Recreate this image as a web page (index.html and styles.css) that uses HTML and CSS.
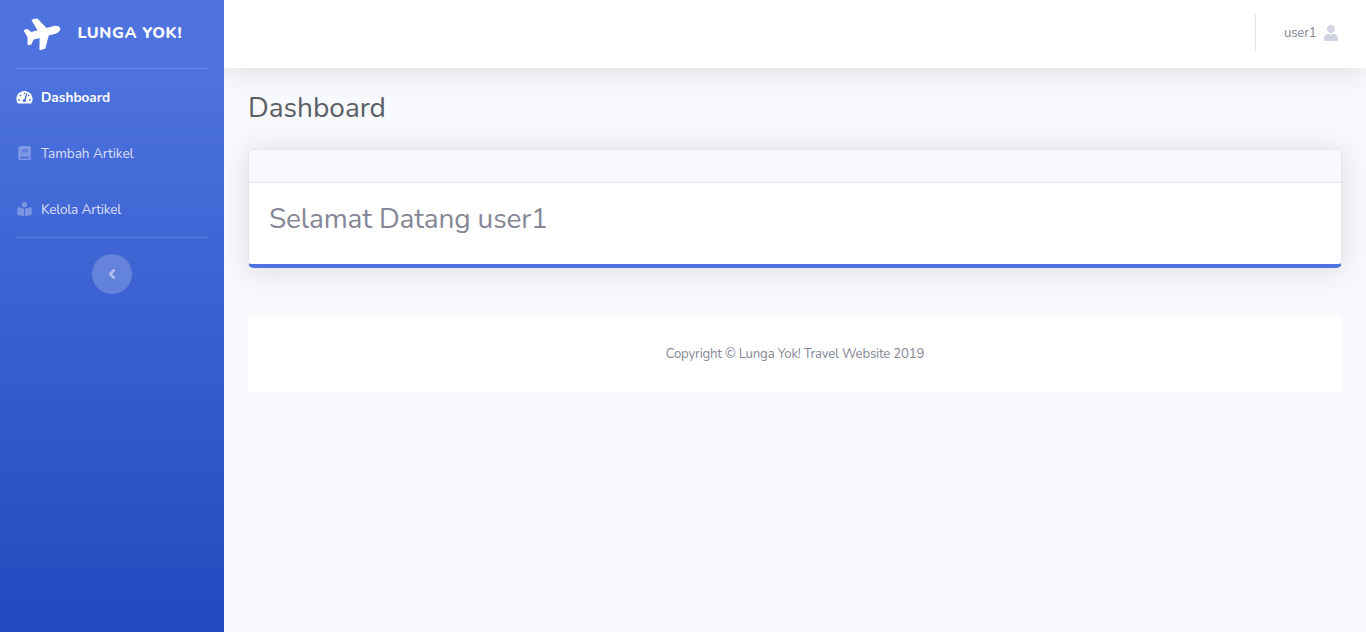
FILE: index.html
```html
<!DOCTYPE html>
<html lang="id">
<head>
<meta charset="utf-8">
<title>Lunga Yok! - Dashboard</title>
<link rel="stylesheet" href="styles.css">
</head>
<body>
<div class="wrapper">
  <nav class="sidebar">
    <a class="brand">
      <svg class="brand-icon" viewBox="0 0 576 512"><path d="M480 192H365.71L260.61 8.06A16.014 16.014 0 0 0 246.71 0h-65.5c-10.63 0-18.3 10.17-15.38 20.39L214.86 192H112l-43.2-57.6c-3.02-4.03-7.77-6.4-12.8-6.4H16.01C5.6 128-2.04 137.78.49 147.88L32 256 .49 364.12C-2.04 374.22 5.6 384 16.01 384H56c5.04 0 9.78-2.37 12.8-6.4L112 320h102.86l-49.03 171.6c-2.92 10.22 4.75 20.4 15.38 20.4h65.5c5.74 0 11.04-3.08 13.89-8.06L365.71 320H480c35.35 0 96-28.65 96-64s-60.65-64-96-64z"/></svg>
      <span class="brand-text">LUNGA YOK!</span>
    </a>
    <hr class="divider">
    <a class="nav-link active">
      <svg class="nav-icon" viewBox="0 0 576 512"><path d="M288 32C128.94 32 0 160.94 0 320c0 52.8 14.25 102.26 39.06 144.8 5.61 9.62 16.3 15.2 27.44 15.2h443c11.14 0 21.83-5.58 27.44-15.2C561.75 422.26 576 372.8 576 320c0-159.06-128.94-288-288-288zm0 64c14.71 0 26.58 10.13 30.32 23.65-1.11 2.26-2.64 4.23-3.45 6.67l-9.22 27.67c-5.13 3.49-10.97 6.01-17.64 6.01-17.67 0-32-14.33-32-32S270.33 96 288 96zM96 384c-17.67 0-32-14.33-32-32s14.33-32 32-32 32 14.33 32 32-14.33 32-32 32zm48-160c-17.67 0-32-14.33-32-32s14.33-32 32-32 32 14.33 32 32-14.33 32-32 32zm246.77-72.41l-61.33 184C343.13 347.33 352 364.54 352 384c0 11.72-3.38 22.55-8.88 32H232.88c-5.5-9.45-8.88-20.28-8.88-32 0-33.94 26.5-61.43 59.9-63.59l61.34-184.01c4.17-12.56 17.73-19.45 30.36-15.17 12.57 4.19 19.35 17.79 15.17 30.36zm14.66 57.2l15.52-46.55c3.47-1.29 7.13-2.23 11.05-2.23 17.67 0 32 14.33 32 32s-14.33 32-32 32c-11.38-.01-20.89-6.28-26.57-15.22zM480 384c-17.67 0-32-14.33-32-32s14.33-32 32-32 32 14.33 32 32-14.33 32-32 32z"/></svg>
      <span>Dashboard</span>
    </a>
    <a class="nav-link">
      <svg class="nav-icon" viewBox="0 0 448 512"><path d="M448 360V24c0-13.3-10.7-24-24-24H96C43 0 0 43 0 96v320c0 53 43 96 96 96h328c13.3 0 24-10.7 24-24v-16c0-7.5-3.5-14.3-8.9-18.7-4.2-15.4-4.2-59.3 0-74.7 5.4-4.3 8.9-11.1 8.9-18.6zM128 134c0-3.3 2.7-6 6-6h212c3.3 0 6 2.7 6 6v20c0 3.3-2.7 6-6 6H134c-3.3 0-6-2.7-6-6v-20zm0 64c0-3.3 2.7-6 6-6h212c3.3 0 6 2.7 6 6v20c0 3.3-2.7 6-6 6H134c-3.3 0-6-2.7-6-6v-20zm253.4 250H96c-17.7 0-32-14.3-32-32 0-17.6 14.4-32 32-32h285.4c-1.9 17.1-1.9 46.9 0 64z"/></svg>
      <span class="label-add">Tambah Artikel</span>
    </a>
    <a class="nav-link">
      <svg class="nav-icon" viewBox="0 0 512 512"><path d="M352 96c0-53.02-42.98-96-96-96s-96 42.98-96 96 42.98 96 96 96 96-42.98 96-96zM233.59 241.09c-59.33-36.32-155.43-46.3-203.79-49.05C13.55 191.13 0 203.51 0 219.14v222.8c0 14.33 11.59 26.28 26.49 27.05 43.66 2.29 131.99 10.68 193.04 41.43 9.37 4.72 20.48-1.71 20.48-11.87V252.56c-.01-4.67-2.32-8.95-6.42-11.47zm248.61-49.05c-48.35 2.74-144.46 12.73-203.78 49.05-4.1 2.51-6.41 6.96-6.41 11.63v245.79c0 10.19 11.14 16.63 20.54 11.9 61.04-30.72 149.32-39.11 192.97-41.4 14.9-.78 26.49-12.73 26.49-27.06V219.14c-.01-15.63-13.56-28.01-29.8-27.1z"/></svg>
      <span class="label-manage">Kelola Artikel</span>
    </a>
    <hr class="divider">
    <button class="toggle" aria-label="Toggle sidebar">
      <svg class="toggle-icon" viewBox="0 0 256 512"><path d="M31.7 239l136-136c9.4-9.4 24.6-9.4 33.9 0l22.6 22.6c9.4 9.4 9.4 24.6 0 33.9L127.9 256l96.4 96.4c9.4 9.4 9.4 24.6 0 33.9L201.7 409c-9.4 9.4-24.6 9.4-33.9 0l-136-136c-9.5-9.4-9.5-24.6-.1-34z"/></svg>
    </button>
  </nav>
  <div class="content">
    <header class="topbar">
      <div class="topbar-divider"></div>
      <span class="user-name">user1</span>
      <svg class="user-icon" viewBox="0 0 448 512"><path d="M224 256c70.7 0 128-57.3 128-128S294.7 0 224 0 96 57.3 96 128s57.3 128 128 128zm89.6 32h-16.7c-22.2 10.2-46.9 16-72.9 16s-50.6-5.8-72.9-16h-16.7C60.2 288 0 348.2 0 422.4V464c0 26.5 21.5 48 48 48h352c26.5 0 48-21.5 48-48v-41.6c0-74.2-60.2-134.4-134.4-134.4z"/></svg>
    </header>
    <main class="main">
      <h1 class="page-title">Dashboard</h1>
      <section class="card">
        <div class="card-header"></div>
        <div class="card-body"><h2 class="welcome">Selamat Datang user1</h2></div>
      </section>
      <footer class="footer"><span class="copyright">Copyright © Lunga Yok! Travel Website 2019</span></footer>
    </main>
  </div>
</div>
</body>
</html>
```
FILE: styles.css
```css
* { box-sizing: border-box; }
body {
  margin: 0;
  font-family: Nunito, Lato, "Liberation Sans", sans-serif;
  font-size: 16px;
  color: #858796;
  background: #f8f9fc;
}
svg { display: block; fill: currentColor; }
.wrapper { display: flex; height: 632px; overflow: hidden; }
.sidebar {
  position: relative;
  z-index: 1;
  width: 224px;
  flex: none;
  display: flex;
  flex-direction: column;
  background: linear-gradient(180deg, #4e73df 10%, #224abe 100%);
}
.brand { display: flex; align-items: center; height: 68px; padding: 0 0 2px 25px; color: #fff; }
.brand-icon { width: 36px; height: 32px; transform: rotate(-15deg); }
.brand-text { margin: -1px 0 0 16.5px; font-weight: 800; font-size: 16px; letter-spacing: 0.6px; white-space: nowrap; }
.divider { width: 192px; margin: 0 16px; border: 0; border-top: 1px solid rgba(255, 255, 255, .15); }
.nav-link {
  display: flex;
  align-items: center;
  gap: 8px;
  height: 56px;
  padding-left: 16px;
  font-size: 13.6px;
  color: rgba(255, 255, 255, .8);
  white-space: nowrap;
}
.nav-link.active { color: #fff; font-weight: 700; }
.nav-icon { width: 17px; height: 14.4px; color: rgba(255, 255, 255, .3); }
.active .nav-icon { color: #fff; }
.label-add { letter-spacing: -0.06px; }
.label-manage { letter-spacing: -0.2px; }
.toggle {
  display: flex;
  align-items: center;
  justify-content: center;
  width: 40px;
  height: 40px;
  margin: 16px auto 0;
  padding: 0 1px 0 0;
  border: 0;
  border-radius: 50%;
  background: rgba(255, 255, 255, .2);
  color: rgba(255, 255, 255, .5);
}
.toggle-icon { width: 8px; height: 16px; }
.content { flex: 1; min-width: 0; }
.topbar {
  display: flex;
  align-items: center;
  justify-content: flex-end;
  height: 68px;
  padding: 0 28px 2px 0;
  background: #fff;
  box-shadow: 0 2.4px 28px 0 rgba(58, 59, 69, .15);
}
.topbar-divider { width: 1px; height: 38px; margin-right: 28px; background: #e3e6f0; }
.user-name { width: 32px; margin-right: 8px; font-size: 13.2px; letter-spacing: -0.2px; white-space: nowrap; }
.user-icon { width: 14px; height: 16px; color: #d1d3e2; }
.main { padding: 23px 24px 0; }
.page-title { margin: 0 0 24px; font-size: 28px; line-height: 34px; font-weight: 400; color: #5a5f66; }
.card {
  height: 119px;
  border: 1px solid #e3e6f0;
  border-bottom: 4px solid #4e73df;
  border-radius: 5.6px;
  background: #fff;
  box-shadow: 0 2.4px 28px 0 rgba(58, 59, 69, .15);
}
.card-header { height: 33px; border-bottom: 1px solid #e3e6f0; border-radius: 4.6px 4.6px 0 0; background: #f8f9fc; }
.card-body { padding: 19px 20px; }
.welcome { margin: 0; font-size: 28px; line-height: 34px; font-weight: 400; letter-spacing: -0.15px; }
.footer { display: flex; align-items: center; justify-content: center; height: 76px; margin-top: 48px; padding-bottom: 1px; background: #fff; }
.copyright { font-size: 13.2px; letter-spacing: -0.19px; white-space: nowrap; }
```
